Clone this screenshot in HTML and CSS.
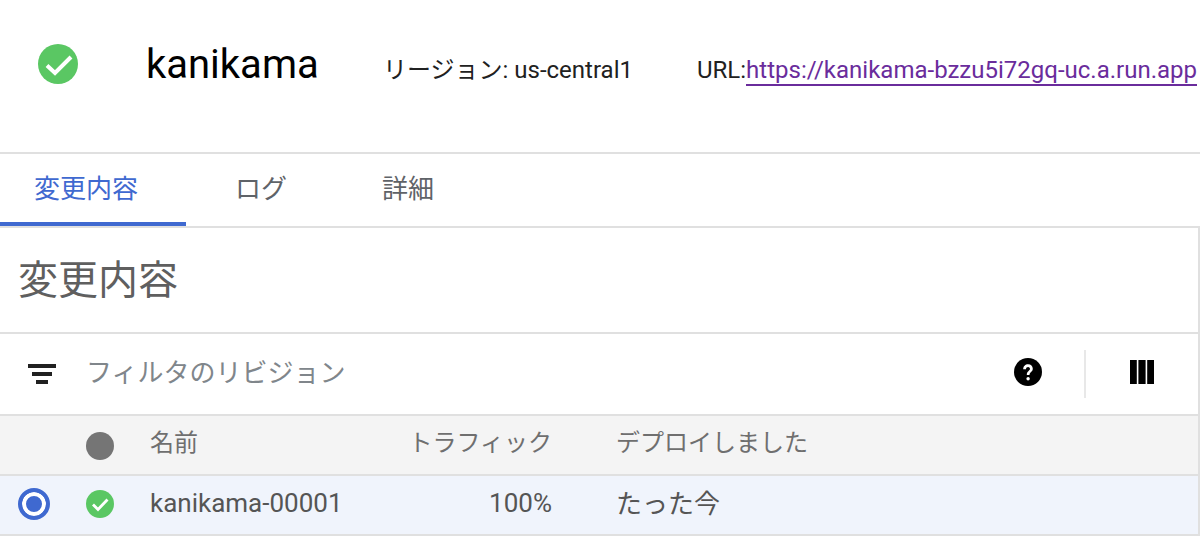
FILE: index.html
```html
<!DOCTYPE html>
<html lang="ja">
  <head>
    <meta charset="UTF-8">
    <title>kanikama</title>
    <link rel="stylesheet" href="styles.css">
  </head>

  <body>
    <div class="service-head">
      <svg class="head-icon" viewBox="0 0 40 40">
        <circle cx="20" cy="20" r="20" fill="#5ac763"/>
        <path d="M9 21.500l8 7.500 16-16" fill="none" stroke="#fff" stroke-width="4"/>
      </svg>
      <h1 class="service-name">kanikama</h1>
      <span class="region">リージョン: us-central1</span>
      <span class="url-box">URL:<a class="url-link" href="#">https://kanikama-bzzu5i72gq-uc.a.run.app</a></span>
    </div>

    <div class="tabs">
      <div class="tab active">変更内容</div>
      <div class="tab">ログ</div>
      <div class="tab">詳細</div>
    </div>

    <div class="panel">
      <h2 class="panel-title">変更内容</h2>

      <div class="filter-bar">
        <svg class="filter-icon" viewBox="0 0 28 20">
          <path d="M0 0h28v4H0zM4 8h20v4H4zM8 16h12v4H8z" fill="#212121"/>
        </svg>
        <span class="filter-text">フィルタのリビジョン</span>
        <svg class="help-icon" viewBox="0 0 28 28">
          <circle cx="14" cy="14" r="14" fill="#000"/>
          <path d="M9.200 11.200c0-2.800 2.100-4.900 4.900-4.900s4.700 1.900 4.700 4.400c0 3.200-3.300 3.300-3.300 6.300h-2.700c0-4 3.200-4.100 3.200-6.200 0-1.100-.9-1.900-1.900-1.900-1.200 0-2.100.9-2.100 2.300z" fill="#fff"/>
          <circle cx="14.100" cy="20.700" r="1.700" fill="#fff"/>
        </svg>
        <div class="bar-divider"></div>
        <svg class="columns-icon" viewBox="0 0 24 24">
          <path d="M0 0h6.800v24H0zM8.400 0h7.200v24H8.400zM17.200 0H24v24h-6.800z" fill="#000"/>
        </svg>
      </div>

      <div class="table-row table-head">
        <div class="col-radio"></div>
        <div class="col-status"><span class="status-dot"></span></div>
        <div class="col-name">名前</div>
        <div class="col-traffic">トラフィック</div>
        <div class="col-deployed">デプロイしました</div>
      </div>

      <div class="table-row table-body">
        <div class="col-radio"><span class="radio"></span></div>
        <div class="col-status">
          <svg class="row-icon" viewBox="0 0 28 28">
            <circle cx="14" cy="14" r="14" fill="#5ac763"/>
            <path d="M7 14.500l5 5 9.500-10" fill="none" stroke="#fff" stroke-width="2.800"/>
          </svg>
        </div>
        <div class="col-name">kanikama-00001</div>
        <div class="col-traffic">100%</div>
        <div class="col-deployed">たった今</div>
      </div>
    </div>
  </body>
</html>
```

FILE: styles.css
```css
* {
  margin: 0;
  padding: 0;
  box-sizing: border-box;
}

body {
  background-color: white;
  font-family: Roboto, "Noto Sans CJK JP", sans-serif;
  overflow: hidden;
}

.service-head {
  height: 154px;
  border-bottom: 2px solid #e0e0e0;
  display: flex;
  align-items: flex-start;
  white-space: nowrap;
}

.head-icon {
  width: 40px;
  height: 40px;
  margin: 44px 68px 0 38px;
}

.service-name {
  width: 237px;
  margin-top: 42px;
  font-size: 40px;
  line-height: 46px;
  font-weight: 400;
  color: black;
}

.region {
  width: 314px;
  margin-top: 55px;
  font-size: 24px;
  line-height: 30px;
  color: #212121;
}

.url-box {
  margin-top: 55px;
  font-size: 24px;
  line-height: 30px;
  color: #212121;
}

.url-link {
  color: #6a2c9c;
  line-height: 28px;
  text-decoration: none;
  border-bottom: 2px solid #6a2c9c;
  display: inline-block;
}

.tabs {
  height: 74px;
  border-bottom: 2px solid #e0e0e0;
  display: flex;
}

.tab {
  width: 147px;
  height: 72px;
  padding: 18px 0 0 49px;
  font-size: 26px;
  line-height: 34px;
  color: #5f6368;
}

.tab.active {
  width: 186px;
  padding-left: 34px;
  color: #3f69d0;
  border-bottom: 4px solid #3f69d0;
}

.panel {
  border-right: 2px solid #e0e0e0;
}

.panel-title {
  height: 106px;
  padding: 28px 0 0 18px;
  border-bottom: 2px solid #e0e0e0;
  font-size: 40px;
  line-height: 50px;
  font-weight: 400;
  color: #5f5f5f;
}

.filter-bar {
  height: 82px;
  border-bottom: 2px solid #e0e0e0;
  display: flex;
  align-items: center;
}

.filter-icon {
  width: 28px;
  height: 20px;
  margin-left: 28px;
}

.filter-text {
  flex: 1;
  margin-left: 30px;
  padding-bottom: 8px;
  font-size: 26px;
  color: #80868b;
}

.help-icon {
  width: 28px;
  height: 28px;
  margin-bottom: 4px;
}

.bar-divider {
  width: 2px;
  height: 48px;
  margin: 0 44px 0 42px;
  background-color: #e8e8e8;
}

.columns-icon {
  width: 24px;
  height: 24px;
  margin: 0 44px 4px 0;
}

.table-row {
  height: 60px;
  border-bottom: 2px solid #e0e0e0;
  display: flex;
  align-items: center;
  font-size: 24px;
  color: #6f6f6f;
}

.table-head {
  background-color: #f4f4f4;
}

.table-body {
  background-color: #f0f4fc;
  font-size: 26px;
  color: #555;
}

.col-radio {
  width: 86px;
  padding-left: 18px;
  display: flex;
}

.col-status {
  width: 64px;
  display: flex;
}

.col-name {
  width: 220px;
  padding-bottom: 4px;
}

.col-traffic {
  width: 182px;
  padding-bottom: 4px;
  text-align: right;
}

.col-deployed {
  margin-left: 64px;
  padding-bottom: 8px;
}

.table-head .col-name,
.table-head .col-traffic,
.table-head .col-deployed {
  padding-bottom: 9px;
}

.status-dot {
  width: 28px;
  height: 28px;
  margin-top: 2px;
  border-radius: 50%;
  background-color: #757575;
}

.row-icon {
  width: 28px;
  height: 28px;
  margin-bottom: 2px;
}

.radio {
  width: 32px;
  height: 32px;
  margin-bottom: 2px;
  border: 4px solid #3f69d0;
  border-radius: 50%;
  background-color: #3f69d0;
  box-shadow: inset 0 0 0 4px white;
}
```
